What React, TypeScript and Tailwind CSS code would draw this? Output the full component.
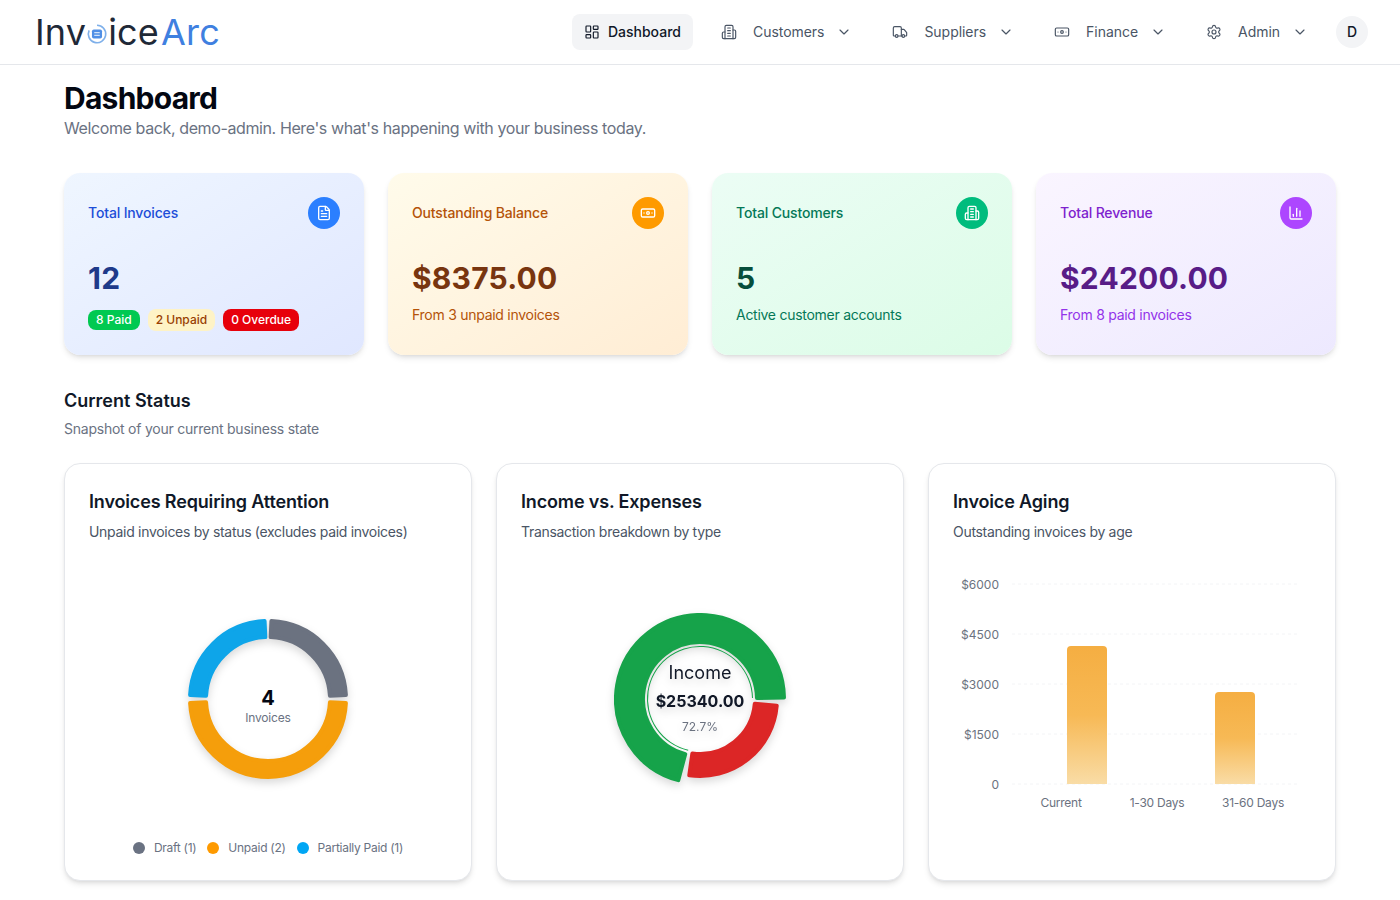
import { BarChart3, Banknote, ChevronDown, FileText, LayoutDashboard, Settings, Truck } from 'lucide-react';
import type { ComponentType } from 'react';

type IconType = ComponentType<{ className?: string; strokeWidth?: number }>;

const font = { fontFamily: 'Inter, "Liberation Sans", sans-serif' };

// point on a circle, angle in degrees clockwise from the top
function pt(cx: number, cy: number, r: number, a: number) {
  const rad = (a * Math.PI) / 180;
  return `${(cx + r * Math.sin(rad)).toFixed(2)} ${(cy - r * Math.cos(rad)).toFixed(2)}`;
}

function arc(cx: number, cy: number, r0: number, r1: number, a0: number, a1: number) {
  const large = a1 - a0 > 180 ? 1 : 0;
  return `M${pt(cx, cy, r1, a0)} A${r1} ${r1} 0 ${large} 1 ${pt(cx, cy, r1, a1)} L${pt(cx, cy, r0, a1)} A${r0} ${r0} 0 ${large} 0 ${pt(cx, cy, r0, a0)} Z`;
}

// tall tower with two side wings, the older lucide Building2 shape
function Building({ className, strokeWidth = 2 }: { className?: string; strokeWidth?: number }) {
  return (
    <svg viewBox="0 0 24 24" className={className} fill="none" stroke="currentColor" strokeWidth={strokeWidth} strokeLinecap="round" strokeLinejoin="round">
      <path d="M6 22V4a2 2 0 0 1 2-2h8a2 2 0 0 1 2 2v18Z" />
      <path d="M6 12H4a2 2 0 0 0-2 2v6a2 2 0 0 0 2 2h2" />
      <path d="M18 9h2a2 2 0 0 1 2 2v9a2 2 0 0 1-2 2h-2" />
      <path d="M10 6h4" />
      <path d="M10 10h4" />
      <path d="M10 14h4" />
      <path d="M10 18h4" />
    </svg>
  );
}

function NavItem({ icon: Icon, label }: { icon: IconType; label: string }) {
  return (
    <div className="flex items-center h-9 px-3 text-sm text-gray-600 tracking-[-0.04px]">
      <Icon className="w-4 h-4 mr-4" strokeWidth={1.75} />
      <span>{label}</span>
      <ChevronDown className="w-4 h-4 ml-3" strokeWidth={1.75} />
    </div>
  );
}

function Header() {
  return (
    <header className="h-[65px] border-b border-gray-200 bg-white flex items-center justify-between pl-[35px] pr-8">
      <div className="flex items-center text-[36px] font-normal leading-none text-[#1f2937] tracking-[0.005em]">
        <span>Inv</span>
        <svg viewBox="0 0 24 24" className="w-[22px] h-[22px] mt-[3px]">
          <path d="M12 2.5a9.5 9.5 0 1 1-8.6 5.5" fill="none" stroke="#7fb0ea" strokeWidth="1.8" />
          <rect x="6.5" y="7" width="11" height="10" rx="2" fill="#4f8fe6" />
          <path d="M9 10.5h6M9 13.5h6" stroke="#cfe2fa" strokeWidth="1.2" />
        </svg>
        <span>ice</span>
        <span className="text-[#3f80e0] ml-[2px]">Arc</span>
      </div>
      <nav className="flex items-center gap-4">
        <div className="flex items-center h-9 px-3 rounded-lg bg-gray-100 text-sm font-medium text-gray-900">
          <LayoutDashboard className="w-4 h-4 mr-2" strokeWidth={1.75} />
          <span>Dashboard</span>
        </div>
        <NavItem icon={Building} label="Customers" />
        <NavItem icon={Truck} label="Suppliers" />
        <NavItem icon={Banknote} label="Finance" />
        <NavItem icon={Settings} label="Admin" />
        <div className="w-8 h-8 rounded-full bg-gray-100 flex items-center justify-center text-sm font-medium text-gray-900">
          D
        </div>
      </nav>
    </header>
  );
}

function StatCard(props: {
  bg: string;
  labelColor: string;
  valueColor: string;
  iconBg: string;
  icon: IconType;
  label: string;
  value: string;
  children: React.ReactNode;
}) {
  const Icon = props.icon;
  return (
    <div className={`h-[182px] rounded-2xl p-6 bg-gradient-to-br shadow-md ${props.bg}`}>
      <div className="flex items-center justify-between h-8">
        <p className={`text-sm font-medium tracking-[-0.15px] ${props.labelColor}`}>{props.label}</p>
        <div className={`w-8 h-8 rounded-full flex items-center justify-center ${props.iconBg}`}>
          <Icon className="w-4 h-4 text-white" strokeWidth={2} />
        </div>
      </div>
      <p className={`mt-[31px] text-3xl leading-9 font-bold tracking-[0.2px] ${props.valueColor}`}>{props.value}</p>
      {props.children}
    </div>
  );
}

function ChartCard({ title, desc, children }: { title: string; desc: string; children: React.ReactNode }) {
  return (
    <div className="h-[418px] rounded-2xl border border-gray-200 bg-white shadow-md px-6 pt-6 flex flex-col">
      <h3 className="text-lg leading-7 font-semibold text-gray-900 tracking-[-0.15px]">{title}</h3>
      <p className="mt-[6px] text-sm leading-5 text-gray-600 tracking-[-0.3px]">{desc}</p>
      {children}
    </div>
  );
}

function InvoicesDonut() {
  const cx = 100;
  const cy = 100;
  return (
    <svg width="200" height="200" viewBox="0 0 200 200" className="mx-auto mt-[57px] drop-shadow-lg">
      <g strokeWidth="4" strokeLinejoin="round">
        <path d={arc(cx, cy, 62, 78, 2.5, 87)} fill="#6b7280" stroke="#6b7280" />
        <path d={arc(cx, cy, 62, 78, 93, 267)} fill="#f59e0b" stroke="#f59e0b" />
        <path d={arc(cx, cy, 62, 78, 273, 357.5)} fill="#0ea5e9" stroke="#0ea5e9" />
      </g>
    </svg>
  );
}

function LegendDot({ color, label }: { color: string; label: string }) {
  return (
    <div className="flex items-center gap-[9px] text-xs text-gray-500 tracking-[-0.27px]">
      <span className={`w-3 h-3 rounded-full ${color}`} />
      <span>{label}</span>
    </div>
  );
}

function IncomeDonut() {
  const cx = 100;
  const cy = 100;
  return (
    <svg width="200" height="200" viewBox="0 0 200 200" className="mx-auto mt-[57px] drop-shadow-lg">
      <g strokeLinejoin="round">
        <path d={arc(cx, cy, 57, 84, -165, 89)} fill="#16a34a" stroke="#16a34a" strokeWidth="4" />
        <path d={arc(cx, cy, 52, 53, -167, 89)} fill="#16a34a" />
        <path d={arc(cx, cy, 55, 77, 95, 188)} fill="#dc2626" stroke="#dc2626" strokeWidth="4" />
      </g>
      <text x={cx} y="80" textAnchor="middle" fontSize="18" fill="#111827">Income</text>
      <text x={cx} y="108" textAnchor="middle" fontSize="16" fontWeight="700" fill="#111827">$25340.00</text>
      <text x={cx} y="132" textAnchor="middle" fontSize="12" fill="#6b7280">72.7%</text>
    </svg>
  );
}

function AgingChart() {
  const ticks = [
    { label: '$6000', y: 10 },
    { label: '$4500', y: 60 },
    { label: '$3000', y: 110 },
    { label: '$1500', y: 160 },
    { label: '0', y: 210 },
  ];
  const cats = [
    { label: 'Current', x: 108 },
    { label: '1-30 Days', x: 204 },
    { label: '31-60 Days', x: 300 },
  ];
  return (
    <svg width="358" height="240" viewBox="0 0 358 240" className="mt-[32px]">
      <defs>
        <linearGradient id="barFill" x1="0" y1="0" x2="0" y2="1">
          <stop offset="0" stopColor="#f5ae42" />
          <stop offset="0.5" stopColor="#f7b955" />
          <stop offset="1" stopColor="#f9dca6" />
        </linearGradient>
      </defs>
      {ticks.map((t) => (
        <g key={t.label}>
          <line x1="59" x2="345" y1={t.y} y2={t.y} stroke="#f3f4f6" strokeDasharray="3 3" />
          <text x="46" y={t.y + 4.5} textAnchor="end" fontSize="12" fill="#6b7280">{t.label}</text>
        </g>
      ))}
      <path d="M114 210V76a4 4 0 0 1 4-4h32a4 4 0 0 1 4 4V210Z" fill="url(#barFill)" />
      <path d="M262 210V122a4 4 0 0 1 4-4h32a4 4 0 0 1 4 4V210Z" fill="url(#barFill)" />
      {cats.map((c) => (
        <text key={c.label} x={c.x} y="233" textAnchor="middle" fontSize="12" letterSpacing="-0.25" fill="#6b7280">{c.label}</text>
      ))}
    </svg>
  );
}

export default function App() {
  return (
    <div className="min-h-screen bg-white" style={font}>
      <Header />
      <main className="px-16 pt-[15px]">
        <h1 className="text-3xl leading-9 font-bold text-gray-950 tracking-tight">Dashboard</h1>
        <p className="text-base leading-6 text-gray-500 tracking-[-0.39px]">Welcome back, demo-admin. Here's what's happening with your business today.</p>

        <div className="mt-[33px] grid grid-cols-4 gap-6">
          <StatCard
            bg="from-blue-50 to-indigo-100"
            labelColor="text-[#1d4ed8]"
            valueColor="text-[#1e3a8a]"
            iconBg="bg-blue-500"
            icon={FileText}
            label="Total Invoices"
            value="12"
          >
            <div className="mt-[13px] flex items-center gap-2 text-xs font-medium">
              <span className="px-2 h-5 leading-5 rounded-lg bg-green-500 text-white">8 Paid</span>
              <span className="px-2 h-[22px] leading-[22px] rounded-lg bg-amber-100 text-amber-800">2 Unpaid</span>
              <span className="px-2 h-[22px] leading-[22px] rounded-lg bg-red-600 text-white">0 Overdue</span>
            </div>
          </StatCard>
          <StatCard
            bg="from-amber-50 to-orange-100"
            labelColor="text-[#b45309]"
            valueColor="text-[#78350f]"
            iconBg="bg-amber-500"
            icon={Banknote}
            label="Outstanding Balance"
            value="$8375.00"
          >
            <p className="mt-[9px] text-sm leading-5 text-[#b45309] tracking-[-0.27px]">From 3 unpaid invoices</p>
          </StatCard>
          <StatCard
            bg="from-emerald-50 to-green-100"
            labelColor="text-[#047857]"
            valueColor="text-[#064e3b]"
            iconBg="bg-emerald-500"
            icon={Building}
            label="Total Customers"
            value="5"
          >
            <p className="mt-[9px] text-sm leading-5 text-[#047857] tracking-[-0.27px]">Active customer accounts</p>
          </StatCard>
          <StatCard
            bg="from-purple-50 to-violet-100"
            labelColor="text-[#7e22ce]"
            valueColor="text-[#581c87]"
            iconBg="bg-purple-500"
            icon={BarChart3}
            label="Total Revenue"
            value="$24200.00"
          >
            <p className="mt-[9px] text-sm leading-5 text-[#9333ea] tracking-[-0.27px]">From 8 paid invoices</p>
          </StatCard>
        </div>

        <h2 className="mt-8 text-lg leading-7 font-semibold text-gray-900">Current Status</h2>
        <p className="mt-1 text-sm leading-5 text-gray-500 tracking-[-0.24px]">Snapshot of your current business state</p>

        <div className="mt-6 grid grid-cols-3 gap-6 pb-4">
          <ChartCard title="Invoices Requiring Attention" desc="Unpaid invoices by status (excludes paid invoices)">
            <div className="relative">
              <InvoicesDonut />
              <div className="absolute inset-x-0 top-[144px] text-center">
                <p className="text-xl leading-6 font-bold text-gray-950">4</p>
                <p className="text-xs leading-4 text-gray-500 tracking-[-0.2px]">Invoices</p>
              </div>
            </div>
            <div className="mt-[41px] flex items-center justify-center gap-[11px]">
              <LegendDot color="bg-gray-500" label="Draft (1)" />
              <LegendDot color="bg-amber-500" label="Unpaid (2)" />
              <LegendDot color="bg-sky-500" label="Partially Paid (1)" />
            </div>
          </ChartCard>
          <ChartCard title="Income vs. Expenses" desc="Transaction breakdown by type">
            <IncomeDonut />
          </ChartCard>
          <ChartCard title="Invoice Aging" desc="Outstanding invoices by age">
            <AgingChart />
          </ChartCard>
        </div>
      </main>
    </div>
  );
}
